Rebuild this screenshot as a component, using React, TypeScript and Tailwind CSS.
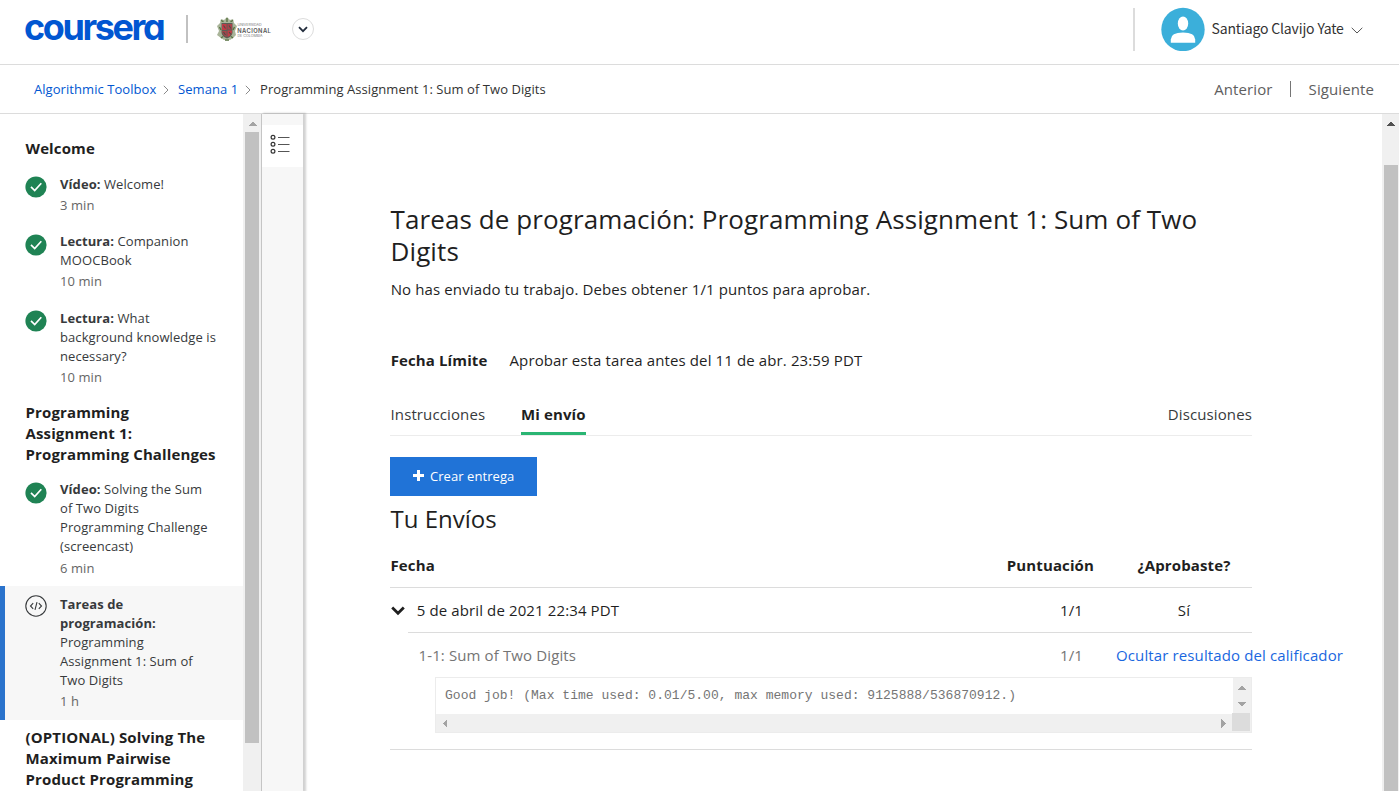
import type { ReactNode } from 'react';

function Triangle({ dir, className }: { dir: 'up' | 'down' | 'left' | 'right'; className: string }) {
  const points = {
    up: '0,6 4.5,1.5 9,6',
    down: '0,2 4.5,6.5 9,2',
    left: '6,0 1.5,4.5 6,9',
    right: '2,0 6.5,4.5 2,9',
  }[dir];
  return (
    <svg width="9" height="9" viewBox="0 0 9 9" className={className} shapeRendering="crispEdges">
      <polygon points={points} fill="currentColor" />
    </svg>
  );
}

function CheckIcon() {
  return (
    <svg width="22" height="22" viewBox="0 0 22 22" className="shrink-0">
      <circle cx="11" cy="11" r="10.6" fill="#1f8354" />
      <path d="M6 10.900l3.700 3.700 6.600-7.400" fill="none" stroke="#fff" strokeWidth="1.700" />
    </svg>
  );
}

function CodeIcon() {
  return (
    <svg width="22" height="22" viewBox="0 0 22 22" className="shrink-0" fill="none" stroke="#373a3c">
      <circle cx="11" cy="11" r="10.200" strokeWidth="1.100" />
      <path d="M8.200 8.200L5.500 11l2.700 2.800M13.800 8.200l2.700 2.800-2.700 2.800M12 7.200l-2 7.600" strokeWidth="1.100" />
    </svg>
  );
}

function Crest() {
  return (
    <svg width="20" height="25" viewBox="0 0 20 25" className="shrink-0">
      <path d="M4 2l3 1 3-3 3 3 3-1 1 4 3 3-2 5 1 4-3 3-3 2-3-1-3 1-3-2-4-3 2-4-2-5 3-3z" fill="#a9b499" />
      <path d="M4.500 6h11v10q-1 4-5.500 5.500Q5.500 20 4.500 16z" fill="#5a5e54" />
      <path d="M5 7h4.600v6H5zM10.500 13.500h4.600q0 5-4.600 6.500z" fill="#c23c46" />
      <path d="M10.500 7h4.600v5.600h-4.600zM5 14h4.600v6Q5.500 18.500 5 14z" fill="#a9434a" />
      <path d="M6.500 8.500l2 3M12 8.500l2 3M6.500 15l2 3M12 15l2 2.500" stroke="#4b4e48" strokeWidth="1.100" />
      <path d="M4 3.500l2.500 1.200M16 3.500l-2.500 1.200M10 1v4M2.500 10l1.500 3M17.500 10L16 13M4 21l2-1.500M16 21l-2-1.500M8 23h4" stroke="#55703f" strokeWidth="1.300" />
    </svg>
  );
}

function UniversityLogo() {
  return (
    <div className="flex items-center">
      <Crest />
      <svg width="35" height="25" viewBox="0 0 35 25" fontFamily="Inter, sans-serif">
        <text x="0.500" y="9.300" fontSize="3.400" fill="#777" textLength="24" lengthAdjust="spacingAndGlyphs">UNIVERSIDAD</text>
        <text x="0.300" y="15.500" fontSize="5.800" fontWeight="600" fill="#555" textLength="33.500">NACIONAL</text>
        <text x="0.500" y="19.600" fontSize="3.400" fill="#777" textLength="25" lengthAdjust="spacingAndGlyphs">DE COLOMBIA</text>
      </svg>
    </div>
  );
}

function Crumb() {
  return (
    <svg width="6" height="10" viewBox="0 0 6 10" className="mt-0.5 shrink-0" fill="none" stroke="#8a8a8a">
      <path d="M0.800 0.800L5 5 0.800 9.200" />
    </svg>
  );
}

type ItemProps = { kind: string; lines: string[]; time: string; active?: boolean; breakAfterKind?: boolean };

function SidebarItem({ kind, lines, time, active, breakAfterKind }: ItemProps) {
  return (
    <li className={`flex gap-[13px] pt-[9px] ${active ? 'border-l-[5px] border-[#2a73cc] bg-[#f7f7f7] pb-[8.65px] pl-5' : 'pb-[8.25px] pl-[25px]'}`}>
      <div className={active ? 'pt-[0.3px]' : 'pt-[1.5px]'}>{active ? <CodeIcon /> : <CheckIcon />}</div>
      <div className="text-[13px] leading-[19px] tracking-[0.08px] whitespace-pre text-[#373a3c]">
        <p>
          <b className="font-bold">{kind}</b>
          {breakAfterKind ? '\n' : ' '}
          {lines.join('\n')}
        </p>
        <p className="mt-[2.15px] text-[#666]">{time}</p>
      </div>
    </li>
  );
}

function SidebarHeading({ lines }: { lines: string[] }) {
  return (
    <h2 className="mt-[7px] mb-[6.3px] pl-[25.5px] text-[15px] leading-[21px] font-bold tracking-[0.13px] whitespace-pre text-[#1f1f1f]">
      {lines.join('\n')}
    </h2>
  );
}

function Sidebar() {
  return (
    <aside className="flex w-[262px] shrink-0 overflow-hidden border-r border-[#c8c8c8]">
      <div className="w-[243px] shrink-0 pt-[17px]">
        <SidebarHeading lines={['Welcome']} />
        <ul className="pt-[0.6px]">
          <SidebarItem kind="Vídeo:" lines={['Welcome!']} time="3 min" />
          <SidebarItem kind="Lectura:" lines={['Companion', 'MOOCBook']} time="10 min" />
          <SidebarItem kind="Lectura:" lines={['What', 'background knowledge is', 'necessary?']} time="10 min" />
        </ul>
        <SidebarHeading lines={['Programming', 'Assignment 1:', 'Programming Challenges']} />
        <ul>
          <SidebarItem kind="Vídeo:" lines={['Solving the Sum', 'of Two Digits', 'Programming Challenge', '(screencast)']} time="6 min" />
          <SidebarItem active breakAfterKind kind={'Tareas de\nprogramación:'} lines={['Programming', 'Assignment 1: Sum of', 'Two Digits']} time="1 h" />
        </ul>
        <SidebarHeading lines={['(OPTIONAL) Solving The', 'Maximum Pairwise', 'Product Programming']} />
      </div>
      <div className="flex w-[18px] shrink-0 flex-col items-center bg-[#f0f0f0] pt-1.5">
        <Triangle dir="up" className="text-[#a3a3a3]" />
        <div className="mt-[3px] h-[611px] w-3.5 bg-[#c1c1c1]" />
      </div>
    </aside>
  );
}

function OutlineRail() {
  return (
    <div className="z-10 w-[41px] shrink-0 bg-[#f7f7f7] pt-[11px] shadow-[2px_0_2px_1px_rgba(0,0,0,0.18)]">
      <div className="flex h-[42px] items-center justify-center bg-white pr-[5px] pb-[5px]">
        <svg width="20" height="20" viewBox="0 0 20 20" fill="none" stroke="#333">
          <circle cx="3" cy="3.200" r="1.900" strokeWidth="1.200" />
          <circle cx="3" cy="10.200" r="1.900" strokeWidth="1.200" />
          <circle cx="3" cy="17.200" r="1.900" strokeWidth="1.200" />
          <path d="M8 3.500h11.500M8 10.500h11.500M8 17.500h11.500" stroke="#555" />
        </svg>
      </div>
    </div>
  );
}

function Row({ first, score, last, className, scoreClass }: { first: ReactNode; score: string; last: ReactNode; className: string; scoreClass: string }) {
  return (
    <div className={`flex items-center ${className}`}>
      <div className="flex flex-1 items-center">{first}</div>
      <div className={scoreClass}>{score}</div>
      <div className="flex w-[136px] justify-center whitespace-nowrap">{last}</div>
    </div>
  );
}

function GraderOutput() {
  return (
    <div className="ml-[45px] flex h-14 border border-[#ececec] font-['Liberation_Mono',monospace] tracking-[0.02px] text-[#757575]">
      <div className="flex flex-1 flex-col">
        <pre className="h-9 pt-2 pl-[9px] font-['Liberation_Mono',monospace] text-[13px] leading-5">
          Good job! (Max time used: 0.01/5.00, max memory used: 9125888/536870912.)
        </pre>
        <div className="flex h-[18px] items-center justify-between bg-[#f0f0f0] px-[5px]">
          <Triangle dir="left" className="text-[#a3a3a3]" />
          <Triangle dir="right" className="text-[#a3a3a3]" />
        </div>
      </div>
      <div className="flex w-[18px] flex-col items-center bg-[#f0f0f0] pt-1.5 pr-px">
        <Triangle dir="up" className="text-[#a3a3a3]" />
        <Triangle dir="down" className="mt-[7px] text-[#a3a3a3]" />
        <div className="mt-1 -ml-px h-[18px] w-[18px] shrink-0 bg-[#dcdcdc]" />
      </div>
    </div>
  );
}

function Main() {
  return (
    <main className="flex-1 overflow-hidden pt-[89px] pl-[87px] text-[15px] leading-6 tracking-[0.12px] text-[#1f1f1f]">
      <div className="w-[862px]">
        <h1 className="pl-[0.5px] text-[26px] leading-8 tracking-[0.1px]">
          Tareas de programación: Programming Assignment 1: Sum of Two
          <br />
          Digits
        </h1>
        <p className="mt-[10px] pl-[0.7px]">No has enviado tu trabajo. Debes obtener 1/1 puntos para aprobar.</p>
        <p className="mt-[47px] flex gap-[22px] pl-[0.7px]">
          <b className="font-bold">Fecha Límite</b>
          <span>Aprobar esta tarea antes del 11 de abr. 23:59 PDT</span>
        </p>
        <nav className="mt-[30px] flex h-[34px] border-b border-[#ececec] text-[#373a3c]">
          <a className="mr-9 w-[95px] pl-[0.5px]">Instrucciones</a>
          <a className="h-[33px] w-[65px] border-b-[3px] border-[#2ab573] font-bold text-[#1f1f1f]">Mi envío</a>
          <a className="ml-auto">Discusiones</a>
        </nav>
        <button className="mt-[21px] flex h-[39px] w-[147px] items-center bg-[#2073d7] pb-px pl-[23px] text-[13px] tracking-[0.06px] text-white">
          <svg width="11" height="11" viewBox="0 0 11 11" className="mb-px">
            <path d="M4 0h3v4h4v3H7v4H4V7H0V4h4z" fill="#fff" />
          </svg>
          <span className="ml-1.5">Crear entrega</span>
        </button>
        <h2 className="mt-[7px] pl-[0.5px] text-[24px] leading-8 tracking-normal">Tu Envíos</h2>
        <Row
          className="mt-[15px] h-[38px] border-b border-[#dcdcdc] pb-2 pl-[0.5px] font-bold"
          first="Fecha"
          score="Puntuación"
          scoreClass="pr-[22px]"
          last="¿Aprobaste?"
        />
        <Row
          className="h-11"
          first={
            <>
              <svg width="14" height="10" viewBox="0 0 14 10" className="mt-px mr-[11.7px] ml-px" fill="none" stroke="#1f1f1f" strokeWidth="2.800">
                <path d="M1.200 1.600L7 7.200l5.800-5.600" />
              </svg>
              5 de abril de 2021 22:34 PDT
            </>
          }
          score="1/1"
          scoreClass="pr-[33px]"
          last="Sí"
        />
        <Row
          className="ml-[18px] h-[45px] border-t border-[#dcdcdc] pb-px pl-[10.5px] text-[#757575]"
          first="1-1: Sum of Two Digits"
          score="1/1"
          scoreClass="pr-[33px]"
          last={<div className="w-[136px]"><a className="text-[#1967e0]">Ocultar resultado del calificador</a></div>}
        />
        <GraderOutput />
        <div className="mt-4 border-t border-[#dcdcdc]" />
      </div>
    </main>
  );
}

export default function App() {
  return (
    <div className="flex h-[791px] w-[1399px] flex-col overflow-hidden bg-white font-['Open_Sans','Liberation_Sans',sans-serif]">
      <header className="flex h-[65px] shrink-0 border-b border-[#dcdcdc]">
        <div className="w-[161px] pt-[5px] pl-6 font-['Inter',sans-serif] text-[36px] leading-[44px] font-bold tracking-[-2.4px] text-[#0156d1] [font-feature-settings:'cv11']">
          coursera
        </div>
        <div className="mt-[15px] ml-[25px] h-7 w-0.5 bg-[#c1c1c1]" />
        <div className="mt-[17px] ml-[29px] h-[25px]">
          <UniversityLogo />
        </div>
        <div className="mt-[18px] ml-5 flex h-[22px] w-[22px] items-center justify-center rounded-full border border-[#dcdcdc]">
          <svg width="10" height="7" viewBox="0 0 10 7" fill="none" stroke="#222c3c" strokeWidth="1.800">
            <path d="M1 1.200l4 4 4-4" />
          </svg>
        </div>
        <div className="mt-2 ml-auto h-[43px] w-0.5 bg-[#dcdcdc]" />
        <svg width="44" height="44" viewBox="0 0 44 44" className="mt-[7px] ml-[26px]">
          <circle cx="22" cy="22.500" r="21.700" fill="#3bafda" />
          <ellipse cx="22" cy="16.500" rx="5.200" ry="7" fill="#fff" />
          <path d="M9.800 35.700v-3.200q0-7 12.200-7t12.200 7v3.200z" fill="#fff" />
        </svg>
        <span className="mt-4 ml-[6.5px] w-[133.5px] font-['Noto_Sans_CJK_SC','Noto_Sans',sans-serif] text-[14px] leading-6 tracking-[-0.15px] whitespace-nowrap text-[#333]">
          Santiago Clavijo Yate
        </span>
        <svg width="12" height="8" viewBox="0 0 12 8" className="mt-[27px] mr-9 ml-1.5" fill="none" stroke="#555">
          <path d="M0.700 0.800L6 6 11.300 0.800" />
        </svg>
      </header>
      <div className="flex h-[49px] shrink-0 items-center border-b border-[#dcdcdc] pr-[25px] pl-[34px] text-[13px] tracking-[0.06px] whitespace-nowrap">
        <a className="mt-px mr-[7px] w-[122px] text-[#0156d1]">Algorithmic Toolbox</a>
        <Crumb />
        <a className="mt-px mr-[7px] ml-[9px] w-[60px] text-[#0156d1]">Semana 1</a>
        <Crumb />
        <span className="mt-px ml-[9px] text-[#333]">Programming Assignment 1: Sum of Two Digits</span>
        <div className="ml-auto flex items-center text-[15px] tracking-[0.1px] text-[#5e5e5e]">
          <a>Anterior</a>
          <div className="mr-[18px] ml-[17px] h-4 w-px bg-[#757575]" />
          <a>Siguiente</a>
        </div>
      </div>
      <div className="flex min-h-0 flex-1">
        <Sidebar />
        <OutlineRail />
        <Main />
        <div className="flex w-[17px] shrink-0 flex-col items-center bg-[#f0f0f0] pt-1.5">
          <Triangle dir="up" className="text-[#505050]" />
          <div className="mt-9 w-3.5 flex-1 bg-[#c1c1c1]" />
        </div>
      </div>
    </div>
  );
}
